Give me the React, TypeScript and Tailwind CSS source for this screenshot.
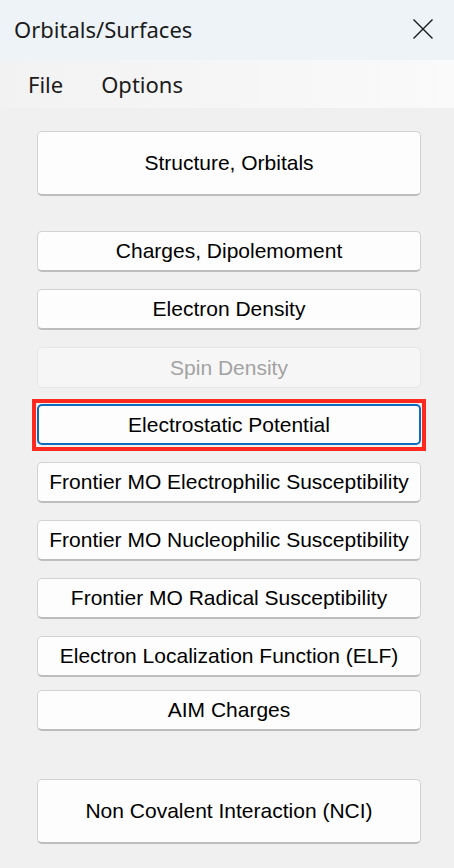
interface Item {
  label: string;
  mt: string;
  h: string;
  disabled?: boolean;
  focused?: boolean;
}

const items: Item[] = [
  { label: "Structure, Orbitals", mt: "mt-[23px]", h: "h-[65px]" },
  { label: "Charges, Dipolemoment", mt: "mt-[35px]", h: "h-[41px]" },
  { label: "Electron Density", mt: "mt-[17px]", h: "h-[41px]" },
  { label: "Spin Density", mt: "mt-[17px]", h: "h-[41px]", disabled: true },
  { label: "Electrostatic Potential", mt: "mt-[16px]", h: "h-[41px]", focused: true },
  { label: "Frontier MO Electrophilic Susceptibility", mt: "mt-[17px]", h: "h-[41px]" },
  { label: "Frontier MO Nucleophilic Susceptibility", mt: "mt-[17px]", h: "h-[41px]" },
  { label: "Frontier MO Radical Susceptibility", mt: "mt-[17px]", h: "h-[41px]" },
  { label: "Electron Localization Function (ELF)", mt: "mt-[17px]", h: "h-[41px]" },
  { label: "AIM Charges", mt: "mt-[13px]", h: "h-[41px]" },
  { label: "Non Covalent Interaction (NCI)", mt: "mt-[48px]", h: "h-[65px]" },
];

export default function App() {
  return (
    <div className="w-[454px] h-[868px] bg-[#f0f0f0] flex flex-col overflow-hidden">
      {/* Title bar */}
      <div className="h-[60px] bg-[#eef3f8] flex items-center justify-between pl-[14px] pr-[21px] shrink-0">
        <span className="text-[22px] text-[#1b1b1b] font-['Noto_Sans',sans-serif] leading-none -mt-[2px]">
          Orbitals/Surfaces
        </span>
        <svg width="20" height="20" viewBox="0 0 20 20" className="-mt-[3px]">
          <path d="M0.5 0.5 L19.5 19.5 M19.5 0.5 L0.5 19.5" stroke="#1b1b1b" strokeWidth="1.4" fill="none" />
        </svg>
      </div>

      {/* Menu */}
      <div className="h-[48px] bg-gradient-to-r from-[#f2f2f2] to-[#fafafa] flex items-center gap-[38px] pl-[28px] shrink-0">
        <span className="text-[22px] text-[#1b1b1b] font-['Noto_Sans',sans-serif] leading-none">File</span>
        <span className="text-[22px] text-[#1b1b1b] font-['Noto_Sans',sans-serif] leading-none">Options</span>
      </div>

      {/* Buttons */}
      <div className="flex flex-col pl-[37px]">
        {items.map((it) => (
          <div key={it.label} className={`relative w-[384px] ${it.mt} ${it.h}`}>
            <button
              disabled={it.disabled}
              className={`w-full h-full rounded-[5px] flex items-center justify-center text-[21px] font-['Liberation_Sans',Arial,sans-serif] ${
                it.disabled
                  ? "bg-[#f6f6f6] border border-[#e6e6e6] text-[#a3a3a3]"
                  : it.focused
                  ? "bg-[#fdfdfd] border-2 border-[#0f6cbd] text-black"
                  : "bg-[#fdfdfd] border border-[#d2d2d2] border-b-[#bdbdbd] border-b-2 text-black"
              }`}
            >
              {it.label}
            </button>
            {it.focused && (
              <span className="absolute -left-[5px] -right-[5px] -top-[5px] -bottom-[6px] border-4 border-[#ff2a1f] pointer-events-none" />
            )}
          </div>
        ))}
      </div>
    </div>
  );
}
